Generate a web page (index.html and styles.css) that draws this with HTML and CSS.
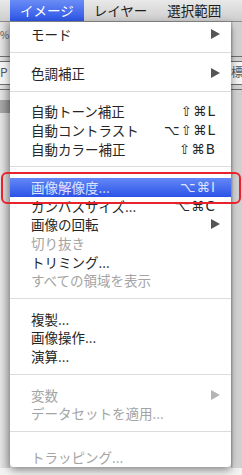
FILE: index.html
```html
<!DOCTYPE html>
<html lang="ja">
<head>
  <meta charset="UTF-8">
  <meta name="viewport" content="width=device-width, initial-scale=1.0">
  <title>イメージ メニュー</title>
  <link rel="stylesheet" href="styles.css">
</head>
<body>

  <div class="screen">
    <div class="menubar">
      <span class="menubar-item active">イメージ</span>
      <span class="menubar-item">レイヤー</span>
      <span class="menubar-item">選択範囲</span>
    </div>

    <div class="workspace">
      <!-- bits of the app window peeking out on the left -->
      <div class="side side-left">
        <div class="strip strip-top"><span>%</span></div>
        <div class="strip strip-thin"></div>
        <div class="strip strip-row"><span>P</span></div>
        <div class="strip strip-thin"></div>
        <div class="strip strip-gap"></div>
        <div class="strip strip-dark"></div>
        <div class="strip strip-rest"></div>
      </div>

      <div class="menu">
        <div class="item"><span>モード</span><span class="arrow"></span></div>
        <div class="sep"></div>
        <div class="item"><span>色調補正</span><span class="arrow"></span></div>
        <div class="sep"></div>
        <div class="item"><span>自動トーン補正</span><span class="key">⇧⌘L</span></div>
        <div class="item"><span>自動コントラスト</span><span class="key">⌥⇧⌘L</span></div>
        <div class="item"><span>自動カラー補正</span><span class="key">⇧⌘B</span></div>
        <div class="sep"></div>
        <div class="item selected"><span>画像解像度...</span><span class="key">⌥⌘I</span></div>
        <div class="item"><span>カンバスサイズ...</span><span class="key">⌥⌘C</span></div>
        <div class="item"><span>画像の回転</span><span class="arrow"></span></div>
        <div class="item disabled"><span>切り抜き</span></div>
        <div class="item"><span>トリミング...</span></div>
        <div class="item disabled"><span>すべての領域を表示</span></div>
        <div class="sep"></div>
        <div class="item"><span>複製...</span></div>
        <div class="item"><span>画像操作...</span></div>
        <div class="item"><span>演算...</span></div>
        <div class="sep"></div>
        <div class="item disabled"><span>変数</span><span class="arrow"></span></div>
        <div class="item disabled"><span>データセットを適用...</span></div>
        <div class="sep sep-last"></div>
        <div class="item disabled"><span>トラッピング...</span></div>
      </div>

      <!-- and on the right -->
      <div class="side side-right">
        <div class="strip strip-top"></div>
        <div class="strip strip-thin"></div>
        <div class="strip strip-row"><span>標</span></div>
        <div class="strip strip-thin"></div>
        <div class="strip strip-rest"></div>
      </div>
    </div>
  </div>

  <!-- red annotation box drawn over the selected item -->
  <div class="callout"></div>

</body>
</html>
```

FILE: styles.css
```css
body {
  margin: 0;
  width: 242px;
  height: 475px;
  overflow: hidden;
  position: relative;
  background-color: #f2f2f2;
  font-family: "Noto Sans CJK JP", "DejaVu Sans", sans-serif;
  color: #262626;
}

.screen {
  display: flex;
  flex-direction: column;
  height: 100%;
}

.menubar {
  display: flex;
  height: 22px;
  padding-left: 10px;
  background: linear-gradient(#e9e9e9, #cdcdcd);
  border-bottom: 1px solid #8a8a8a;
  box-sizing: border-box;
  flex-shrink: 0;
}

.menubar-item {
  padding: 0 10px;
  font-size: 13.5px;
  line-height: 21px;
  color: #1c1c1c;
}

.menubar-item.active {
  background: linear-gradient(#6a8cf6, #2c55e6);
  color: #fff;
}

.workspace {
  flex: 1;
  display: flex;
  align-items: flex-start;
}

.side {
  display: flex;
  flex-direction: column;
  height: 446px;
  background: linear-gradient(90deg, #e4e4e4, #c4c4c4);
  font-size: 12px;
  color: #555;
  overflow: hidden;
}

.side-left {
  width: 10px;
}

.side-right {
  width: 11px;
  background: linear-gradient(90deg, #b8b8b8 1px, #dadada 2px, #cfcfcf);
}

.strip {
  box-sizing: border-box;
  flex-shrink: 0;
}

.strip-top {
  height: 35px;
  border-bottom: 1px solid #6e6e6e;
  padding-top: 7px;
  font-size: 10px;
  line-height: 12px;
}

.strip-thin {
  height: 5px;
  border-bottom: 1px solid #6e6e6e;
}

.strip-row {
  height: 23px;
  border-bottom: 1px solid #6e6e6e;
  padding-top: 3px;
  line-height: 14px;
  background: #f4f4f4;
}

.strip-gap {
  height: 10px;
}

.strip-dark {
  height: 13px;
  background: linear-gradient(90deg, #a8a8a8, #8a8a8a);
}

.strip-rest {
  flex: 1;
}

.menu {
  width: 221px;
  box-sizing: border-box;
  padding: 3px 0 1px;
  background-color: #fff;
  border-radius: 0 0 4px 4px;
  box-shadow: 0 3px 8px rgba(0, 0, 0, 0.45);
  font-size: 13.5px;
  position: relative;
  z-index: 1;
}

.item {
  display: flex;
  justify-content: space-between;
  align-items: center;
  height: 18.6px;
  padding: 0 11px 0 21px;
  line-height: 18px;
  white-space: nowrap;
}

.item.disabled {
  color: #a4a4a4;
}

.item.selected {
  background: linear-gradient(#6488f7, #2b53e6);
  color: #dde4ff;
}

.key {
  margin-right: 4px;
  font-family: "DejaVu Sans", "Noto Sans CJK JP", sans-serif;
  font-size: 13.5px;
  letter-spacing: 1px;
}

.arrow {
  width: 0;
  height: 0;
  border-top: 5.5px solid transparent;
  border-bottom: 5.5px solid transparent;
  border-left: 9px solid #555;
}

.item.disabled .arrow {
  border-left-color: #b4b4b4;
}

.sep {
  height: 1px;
  margin: 8.5px 0 10.5px;
  background-color: #dcdcdc;
}

.sep-last {
  margin-bottom: 15.5px;
}

.callout {
  position: absolute;
  left: 1px;
  top: 172px;
  width: 240px;
  height: 32px;
  box-sizing: border-box;
  border: 2px solid #e8232b;
  border-radius: 6px;
  z-index: 2;
}
```
